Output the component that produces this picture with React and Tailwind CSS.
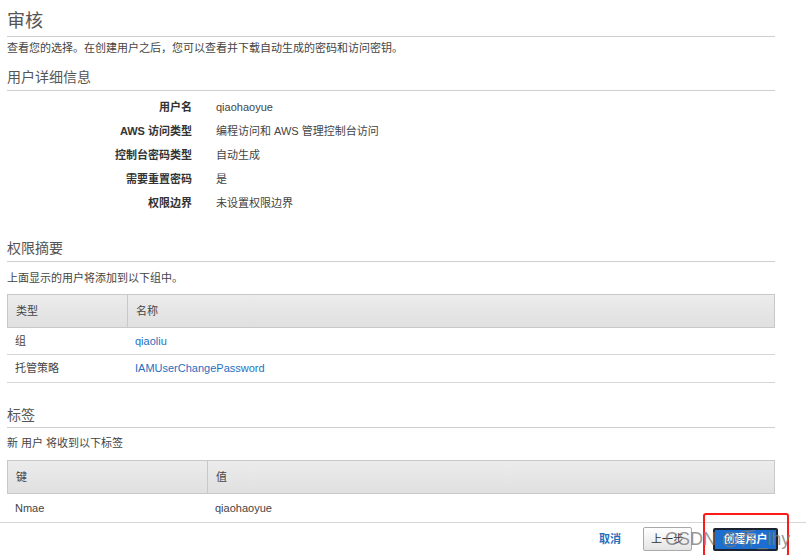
import React from "react";

const details = [
  ["用户名", "qiaohaoyue"],
  ["AWS 访问类型", "编程访问和 AWS 管理控制台访问"],
  ["控制台密码类型", "自动生成"],
  ["需要重置密码", "是"],
  ["权限边界", "未设置权限边界"],
];

const SectionTitle = ({ children, className }) => (
  <div
    className={`border-b border-[#cfcfcf] text-[14px] leading-[20px] text-[#555] ${className}`}
  >
    {children}
  </div>
);

const TableHead = ({ first, second, firstWidth }) => (
  <div className="flex h-[34px] border border-[#c8c8c8] bg-gradient-to-b from-[#ececec] to-[#e0e0e0] text-[#444]">
    <div
      className={`${firstWidth} flex items-center border-r border-[#c8c8c8] pl-2`}
    >
      {first}
    </div>
    <div className="flex items-center pl-2">{second}</div>
  </div>
);

export default function App() {
  return (
    <div
      className="relative h-[555px] w-[806px] overflow-hidden bg-white text-[11px] text-[#444]"
      style={{ fontFamily: '"Liberation Sans", "Noto Sans CJK SC", sans-serif' }}
    >
      <div className="w-[775px] pl-[7px]">
        <div className="border-b border-[#cfcfcf] pt-[9px] pb-[2px] text-[18px] leading-[25px] text-[#555]">
          审核
        </div>
        <div className="mt-[3px] leading-[16px]">
          查看您的选择。在创建用户之后，您可以查看并下载自动生成的密码和访问密钥。
        </div>
        <SectionTitle className="mt-[11px] pb-[3px]">用户详细信息</SectionTitle>

        <div className="mt-[4px]">
          {details.map(([k, v]) => (
            <div key={k} className="flex h-[24px] items-center">
              <div className="w-[185px] text-right font-bold text-[#333]">{k}</div>
              <div className="ml-[24px]">{v}</div>
            </div>
          ))}
        </div>

        <SectionTitle className="mt-[23px] pb-[3px]">权限摘要</SectionTitle>
        <div className="mt-[8px] leading-[16px]">上面显示的用户将添加到以下组中。</div>

        <div className="mt-[8px]">
          <TableHead first="类型" second="名称" firstWidth="w-[120px]" />
          <div className="flex h-[27px] items-center border-b border-[#d6d6d6]">
            <div className="w-[120px] pl-2">组</div>
            <div className="pl-2 text-[#1f6fbf]">qiaoliu</div>
          </div>
          <div className="flex h-[28px] items-center border-b border-[#d6d6d6]">
            <div className="w-[120px] pl-2">托管策略</div>
            <div className="pl-2 text-[#1f6fbf]">IAMUserChangePassword</div>
          </div>
        </div>

        <SectionTitle className="mt-[22px] pb-[2px]">标签</SectionTitle>
        <div className="mt-[7px] leading-[16px]">新 用户 将收到以下标签</div>

        <div className="mt-[9px]">
          <TableHead first="键" second="值" firstWidth="w-[200px]" />
          <div className="flex h-[28px] items-center">
            <div className="w-[200px] pl-2">Nmae</div>
            <div className="pl-2">qiaohaoyue</div>
          </div>
        </div>
      </div>

      <div className="flex h-[33px] items-center justify-end border-t border-[#d6d6d6] pr-[28px]">
        <button className="mr-[22px] text-[11px] font-bold text-[#1f6fbf]">取消</button>
        <button className="mr-[21px] h-[24px] w-[49px] rounded-[2px] border border-[#a9a9a9] bg-gradient-to-b from-[#ffffff] to-[#e4e4e4] text-[11px] text-[#333]">
          上一步
        </button>
        <button className="h-[23px] w-[65px] rounded-[2px] border-2 border-[#1b2330] bg-[#1c6fd0] text-[11px] font-bold text-white">
          创建用户
        </button>
      </div>

      <div className="pointer-events-none absolute left-[703px] top-[513px] h-[44px] w-[86px] rounded-[3px] border-2 border-[#ff1a1a]" />
      <div className="pointer-events-none absolute left-[665px] top-[528px] text-[18px] leading-[22px] text-[#7a7a7a]/80">
        CSDN @乔_lhy
      </div>
    </div>
  );
}
